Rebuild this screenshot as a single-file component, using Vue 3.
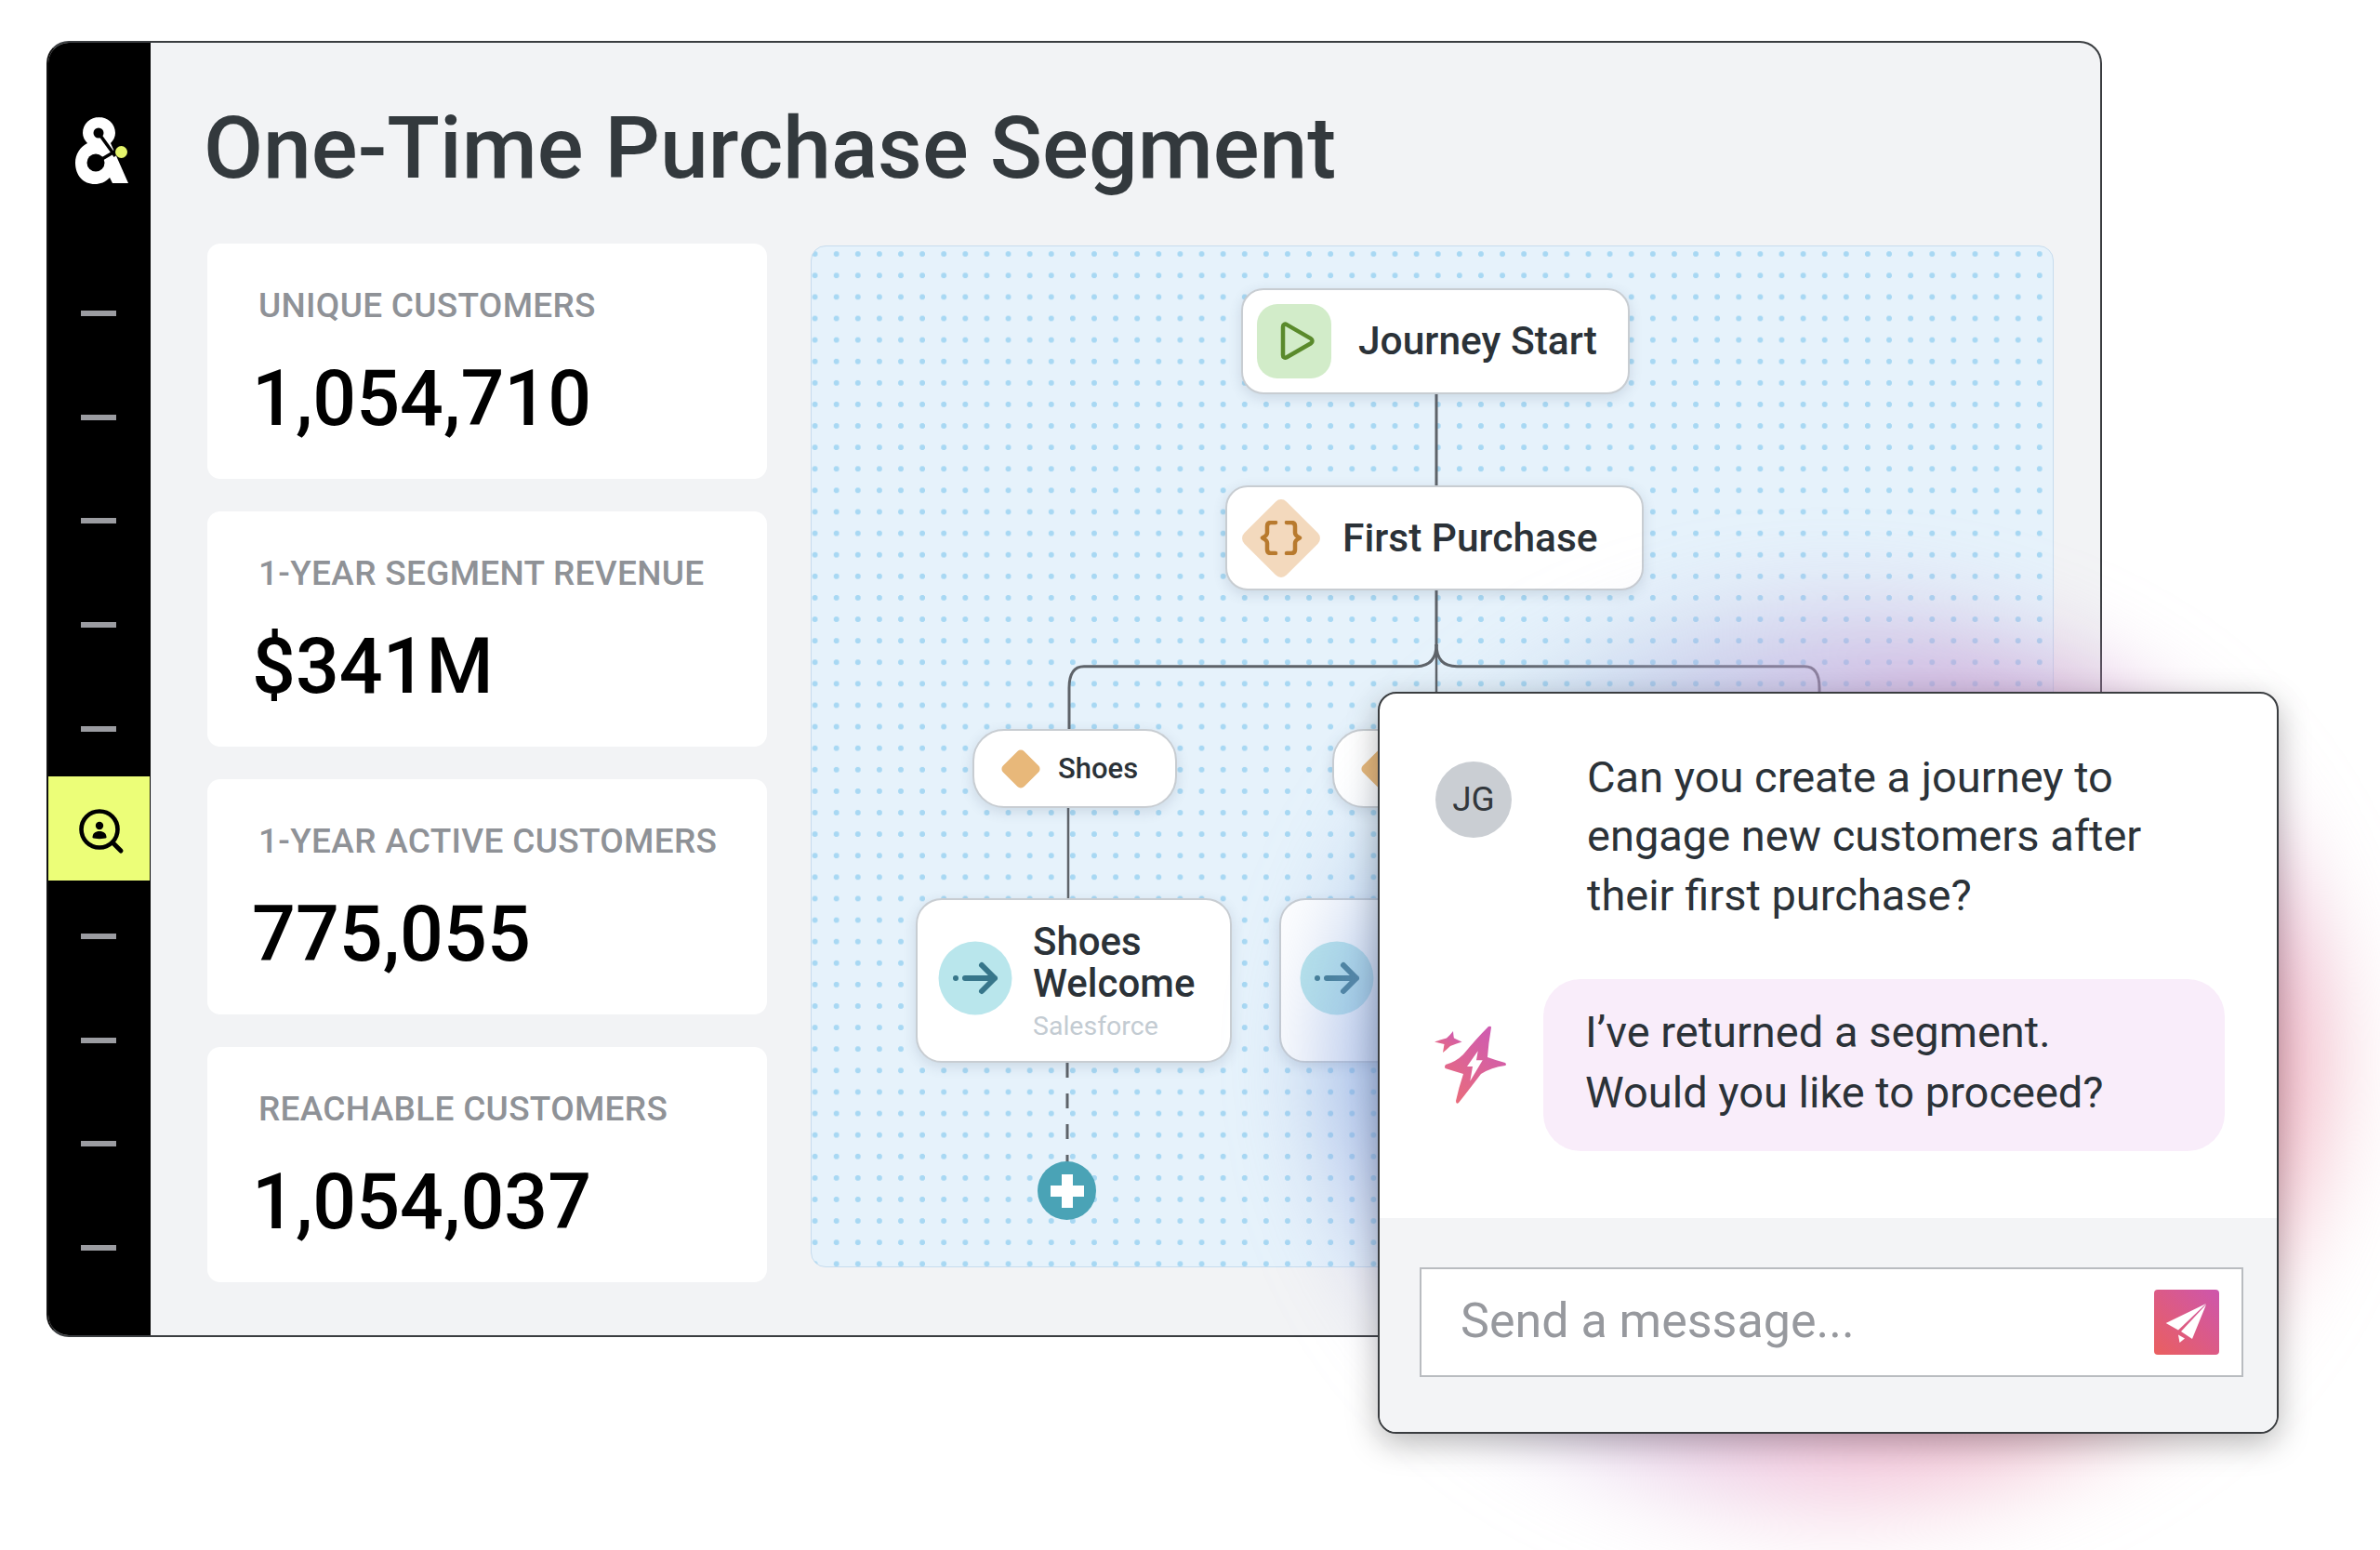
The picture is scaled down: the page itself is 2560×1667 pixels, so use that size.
<template>
  <div class="stage">
    <div class="window">
      <aside class="sidebar">
        <svg class="logo" width="80" height="90" viewBox="0 0 80 90">
          <path fill="#fff" d="M37 11c10 0 18 7 18 17 0 4-2 8-5 11l19 43H52l-3-6c-5 5-10 7-16 7-12 0-21-9-21-23 0-9 5-17 13-21-3-3-5-7-5-11 0-10 8-17 18-17z" />
          <circle cx="37" cy="28" r="5.5" fill="#000" />
          <path d="M37 28l18 25" stroke="#000" stroke-width="3.5" fill="none" />
          <circle cx="34" cy="60" r="9.5" fill="#000" />
          <path d="M34 60l22-13" stroke="#000" stroke-width="3.5" fill="none" />
          <circle cx="61.5" cy="48.5" r="6.5" fill="#e5f56b" />
        </svg>
        <nav class="nav">
          <div v-for="item in navItems" :key="item" class="navItem" :class="{ active: item === 6 }">
            <svg v-if="item === 6" width="56" height="56" viewBox="0 0 56 56">
              <circle cx="26" cy="26" r="19.5" fill="none" stroke="#000" stroke-width="4.6" />
              <path d="M40 40l9 9" stroke="#000" stroke-width="5" stroke-linecap="round" />
              <circle cx="26" cy="22" r="4.2" />
              <path d="M18.5 35c0-5 3-7 7.5-7s7.500 2 7.500 7c-2 1.500-13 1.500-15 0z" />
            </svg>
            <span v-else class="dash"></span>
          </div>
        </nav>
      </aside>

      <main class="main">
        <h1 class="title">One-Time Purchase Segment</h1>
        <div class="content">
          <section class="stats">
            <div v-for="stat in stats" :key="stat.label" class="stat">
              <div class="statLabel">{{ stat.label }}</div>
              <div class="statValue">{{ stat.value }}</div>
            </div>
          </section>

          <section class="canvas">
            <svg class="lines" width="1336" height="1097" viewBox="0 0 1336 1097" fill="none" stroke="#5e6369">
              <path stroke-width="3" d="M672 158V258M672 369V430" />
              <path stroke-width="2.500" d="M672 430V480" />
              <path stroke-width="3" d="M672 428C672 444 665 451.700 650 451.700H293Q277 451.700 277 475V519" />
              <path stroke-width="3" d="M672 428C672 444 679 451.700 694 451.700H1068Q1084 451.700 1084 475V480" />
              <path stroke-width="2.500" d="M276 603V702" />
              <path stroke-width="3" stroke-dasharray="16 17" d="M275 878V985" />
            </svg>

            <div class="node startNode">
              <span class="playBox">
                <svg width="40" height="44" viewBox="0 0 40 44">
                  <path d="M5 6.500c0-2.500 2-3.500 4-2.400l26 15c2 1.200 2 4 0 5.200l-26 15c-2 1.100-4 0-4-2.400z" fill="none" stroke="#5a8a2c" stroke-width="4.500" stroke-linejoin="round" />
                </svg>
              </span>
              <span class="nodeText">Journey Start</span>
            </div>

            <div class="node purchaseNode">
              <span class="bigDiamond">
                <svg width="46" height="37" viewBox="0 0 46 37" fill="none" stroke="#b87a2e" stroke-width="4.500" stroke-linecap="round" stroke-linejoin="round">
                  <path d="M17 2H12Q8 2 8 6V13Q8 16 3 18.500Q8 21 8 24V31Q8 35 12 35H17" />
                  <path d="M29 2H34Q38 2 38 6V13Q38 16 43 18.500Q38 21 38 24V31Q38 35 34 35H29" />
                </svg>
              </span>
              <span class="nodeText purchaseText">First Purchase</span>
            </div>

            <div class="node pill pillOne">
              <span class="smallDiamond"></span>
              <span class="pillText">Shoes</span>
            </div>
            <div class="node pill pillTwo">
              <span class="smallDiamond"></span>
            </div>

            <div class="node action actionOne">
              <svg class="arrowIcon" width="80" height="80" viewBox="0 0 80 80">
                <circle cx="40" cy="40" r="39.500" fill="#b9e6ec" />
                <circle cx="19" cy="40" r="3" fill="#37768a" />
                <path d="M29 40H61M47 26L61 40L47 54" fill="none" stroke="#37768a" stroke-width="6" stroke-linecap="round" stroke-linejoin="round" />
              </svg>
              <div class="actionBody">
                <div class="actionTitle">Shoes<br />Welcome</div>
                <div class="actionSub">Salesforce</div>
              </div>
            </div>
            <div class="node action actionTwo">
              <svg class="arrowIcon" width="80" height="80" viewBox="0 0 80 80">
                <circle cx="40" cy="40" r="39.500" fill="#b9e6ec" />
                <circle cx="19" cy="40" r="3" fill="#37768a" />
                <path d="M29 40H61M47 26L61 40L47 54" fill="none" stroke="#37768a" stroke-width="6" stroke-linecap="round" stroke-linejoin="round" />
              </svg>
            </div>

            <div class="plus"></div>
          </section>
        </div>
      </main>
    </div>

    <div class="glow"></div>

    <div class="chat">
      <div class="chatBody">
        <div class="msgRow">
          <div class="avatar">JG</div>
          <p class="msgText">Can you create a journey to<br />engage new customers after<br />their first purchase?</p>
        </div>
        <div class="replyRow">
          <svg class="sparkle" width="84" height="90" viewBox="0 0 84 90">
            <defs>
              <linearGradient id="spark" x1="0.800" y1="0.100" x2="0.200" y2="1">
                <stop offset="0" stop-color="#cf5bb0" />
                <stop offset="1" stop-color="#e96c7c" />
              </linearGradient>
            </defs>
            <path fill="url(#spark)" d="M66 3Q63 20 62 35Q70 38 81 41Q83 43 81 44Q66 46 55 53Q42 70 31 84Q28 86 28 82Q31 68 36 53Q26 50 16.500 47Q15 45 17 43Q28 40 36 32Q50 15 63 2Q66 1 66 3Z" />
            <path fill="url(#spark)" d="M25 7Q25.500 13 26 14.500Q30 16.500 34.500 18.500Q29 20 22 23Q18 27 14 30Q15 24 15.500 21Q10 19.500 5 18.500Q12 16 18 14.500Q22 11 25 7Z" />
            <path fill="#fff" d="M51.700 28.300L40 45H46L43.300 60.700L56.700 38.300H50Z" />
          </svg>
          <p class="bubble">I’ve returned a segment.<br />Would you like to proceed?</p>
        </div>
      </div>
      <div class="chatFooter">
        <div class="inputBox">
          <span class="placeholder">Send a message...</span>
          <button class="sendBtn">
            <svg width="70" height="70" viewBox="0 0 70 70" fill="#fff">
              <path d="M56 15L12.700 36L26 43.500Z" />
              <path d="M56 16L29 45L41 53Z" />
              <path d="M26 48.500L33 52.500L27.500 57Z" />
            </svg>
          </button>
        </div>
      </div>
    </div>
  </div>
</template>

<script setup>
const navItems = [1, 2, 3, 4, 5, 6, 7, 8, 9, 10]

const stats = [
  { label: 'UNIQUE CUSTOMERS', value: '1,054,710' },
  { label: '1-YEAR SEGMENT REVENUE', value: '$341M' },
  { label: '1-YEAR ACTIVE CUSTOMERS', value: '775,055' },
  { label: 'REACHABLE CUSTOMERS', value: '1,054,037' },
]
</script>

<style>
body {
  background: #fff;
}
</style>

<style scoped>
.stage {
  position: relative;
  width: 2560px;
  height: 1667px;
  overflow: hidden;
  box-sizing: border-box;
  padding: 44px 0 0 50px;
  background: #fff;
  font-family: Roboto, "Liberation Sans", sans-serif;
  color: #2b3238;
}
.window {
  display: flex;
  box-sizing: border-box;
  width: 2211px;
  height: 1394px;
  border: 2px solid #3a3d40;
  border-left-color: #111;
  border-radius: 24px;
  overflow: hidden;
  background: #f2f3f5;
}
.sidebar {
  flex: none;
  width: 110px;
  background: #000;
  margin-left: -2px;
  padding-left: 2px;
  box-sizing: content-box;
}
.logo {
  display: block;
  margin: 69px 0 0 17px;
}
.nav {
  margin-top: 76px;
}
.navItem {
  display: flex;
  align-items: center;
  justify-content: center;
  height: 111.700px;
  padding-right: 2px;
}
.navItem.active {
  margin: -4px 1px 4px 0;
  background: #ecfe78;
  padding: 6px 0 0 4px;
  box-sizing: border-box;
}
.dash {
  width: 38px;
  height: 6px;
  background: #9b9ca1;
}
.main {
  flex: 1;
  padding: 66.500px 0 0 61px;
}
.title {
  margin: 0 0 0 -4px;
  font-size: 93px;
  line-height: 1;
  font-weight: 500;
  color: #33393d;
}
.content {
  display: flex;
  align-items: flex-start;
  gap: 47px;
  margin-top: 56.500px;
}
.stats {
  display: flex;
  flex-direction: column;
  gap: 35px;
  width: 602px;
}
.stat {
  box-sizing: border-box;
  height: 253px;
  padding: 48px 0 0 55px;
  background: #fff;
  border-radius: 14px;
}
.statLabel {
  font-size: 37px;
  line-height: 1;
  font-weight: 500;
  letter-spacing: 0.3px;
  color: #8f9297;
}
.statValue {
  margin: 40.500px 0 0 -7px;
  font-size: 82.500px;
  line-height: 1;
  font-weight: 500;
  color: #000;
}
.canvas {
  position: relative;
  box-sizing: border-box;
  width: 1337px;
  height: 1099px;
  margin-top: 2px;
  border: 1px solid #c7dcee;
  border-radius: 16px;
  background-color: #e6f2fb;
  background-image: radial-gradient(circle, #a8d8f3 2.700px, transparent 3.300px);
  background-size: 23.120px 23.120px;
  background-position: -8px -3.400px;
}
.lines {
  position: absolute;
  left: 0;
  top: 0;
}
.node {
  position: absolute;
  display: flex;
  align-items: center;
  box-sizing: border-box;
  background: #fff;
  border: 2px solid #c8cdd2;
  border-radius: 24px;
  box-shadow: 0 4px 14px rgba(60, 80, 110, 0.16);
}
.startNode {
  left: 462px;
  top: 45px;
  width: 418px;
  height: 114px;
  padding-left: 15px;
}
.purchaseNode {
  left: 445px;
  top: 257px;
  width: 450px;
  height: 113px;
  padding-left: 15px;
}
.playBox {
  display: flex;
  align-items: center;
  justify-content: center;
  width: 80px;
  height: 80px;
  padding-left: 6px;
  box-sizing: border-box;
  margin-right: 29px;
  background: #d2ecc9;
  border-radius: 22px;
}
.bigDiamond {
  position: relative;
  display: flex;
  align-items: center;
  justify-content: center;
  width: 86px;
  height: 86px;
  margin-right: 23px;
}
.bigDiamond::before {
  content: "";
  position: absolute;
  left: 11px;
  top: 11px;
  width: 64px;
  height: 64px;
  background: #f3d9bd;
  border-radius: 8px;
  transform: rotate(45deg);
}
.bigDiamond svg {
  position: relative;
}
.nodeText {
  font-size: 42.500px;
  line-height: 1;
  font-weight: 500;
  color: #2b3238;
}
.purchaseText {
  padding-top: 2px;
}
.pill {
  width: 220px;
  height: 85px;
  border-radius: 34px;
  padding-left: 28px;
}
.pillOne {
  left: 173px;
  top: 519px;
}
.pillTwo {
  left: 560px;
  top: 519px;
}
.smallDiamond {
  width: 32px;
  height: 32px;
  margin: 0 24px 0 6px;
  background: #e8b87a;
  border-radius: 5px;
  transform: rotate(45deg);
}
.pillText {
  font-size: 31px;
  line-height: 1;
  font-weight: 500;
}
.action {
  width: 340px;
  height: 177px;
  border-radius: 28px;
  padding-left: 22px;
}
.actionOne {
  left: 112px;
  top: 701px;
}
.actionTwo {
  left: 503px;
  top: 701px;
  padding-left: 20px;
}
.arrowIcon {
  flex: none;
  margin-top: -5px;
}
.actionBody {
  margin: 0 0 0 22px;
}
.actionTitle {
  font-size: 42px;
  line-height: 45px;
  font-weight: 500;
}
.actionSub {
  margin-top: 8px;
  font-size: 28.500px;
  line-height: 32px;
  color: #c3cbd2;
}
.plus {
  position: absolute;
  left: 243px;
  top: 984px;
  width: 63px;
  height: 63px;
  border-radius: 50%;
  background:
    linear-gradient(#fff, #fff) center / 36px 12px no-repeat,
    linear-gradient(#fff, #fff) center / 12px 36px no-repeat,
    #4aa3b6;
}
.glow {
  position: absolute;
  left: 1440px;
  top: 670px;
  width: 1050px;
  height: 940px;
  border-radius: 50%;
  background: conic-gradient(
    from 0deg,
    rgba(190, 160, 215, 0.6),
    rgba(205, 150, 205, 0.85) 40deg,
    rgba(235, 150, 170, 0.85) 90deg,
    rgba(235, 160, 180, 0.8) 135deg,
    rgba(235, 165, 200, 0.68) 180deg,
    rgba(190, 170, 225, 0.55) 225deg,
    rgba(130, 160, 220, 0.8) 270deg,
    rgba(150, 190, 225, 0.45) 315deg,
    rgba(190, 160, 215, 0.6)
  );
  filter: blur(55px);
  pointer-events: none;
}
.chat {
  position: absolute;
  left: 1482px;
  top: 744px;
  display: flex;
  flex-direction: column;
  box-sizing: border-box;
  width: 969px;
  height: 798px;
  border: 2px solid #3a3d40;
  border-radius: 20px;
  background: #fff;
  overflow: hidden;
  box-shadow: 0 10px 34px rgba(0, 0, 0, 0.28);
}
.chatBody {
  flex: 1;
  padding: 57.500px 0 0 60px;
}
.msgRow {
  display: flex;
}
.avatar {
  flex: none;
  display: flex;
  align-items: center;
  justify-content: center;
  width: 82px;
  height: 82px;
  margin: 15px 81px 0 0;
  border-radius: 50%;
  background: #caced3;
  font-size: 37px;
  color: #33383c;
}
.msgText {
  margin: 0;
  font-size: 47px;
  line-height: 63.500px;
}
.replyRow {
  display: flex;
  align-items: flex-start;
  margin-top: 58.500px;
}
.sparkle {
  flex: none;
  margin: 49px 38px 0 -6px;
}
.bubble {
  box-sizing: border-box;
  width: 733px;
  height: 185px;
  margin: 0;
  padding: 24px 0 0 45px;
  background: #f9edfa;
  border-radius: 40px;
  font-size: 47px;
  line-height: 65px;
}
.chatFooter {
  flex: none;
  display: flex;
  align-items: flex-start;
  box-sizing: border-box;
  height: 230px;
  padding: 53px 0 0 43px;
  background: #f3f4f6;
}
.inputBox {
  display: flex;
  align-items: center;
  justify-content: space-between;
  box-sizing: border-box;
  width: 886px;
  height: 118px;
  padding: 0 24px 0 42px;
  background: #fff;
  border: 2px solid #b9bcc0;
}
.placeholder {
  padding-bottom: 3px;
  font-size: 52px;
  color: #97999e;
}
.sendBtn {
  display: block;
  width: 70px;
  height: 70px;
  padding: 0;
  border: none;
  border-radius: 4px;
  background: linear-gradient(45deg, #ea5f5f, #cd56ad);
}
.sendBtn svg {
  display: block;
}
</style>
